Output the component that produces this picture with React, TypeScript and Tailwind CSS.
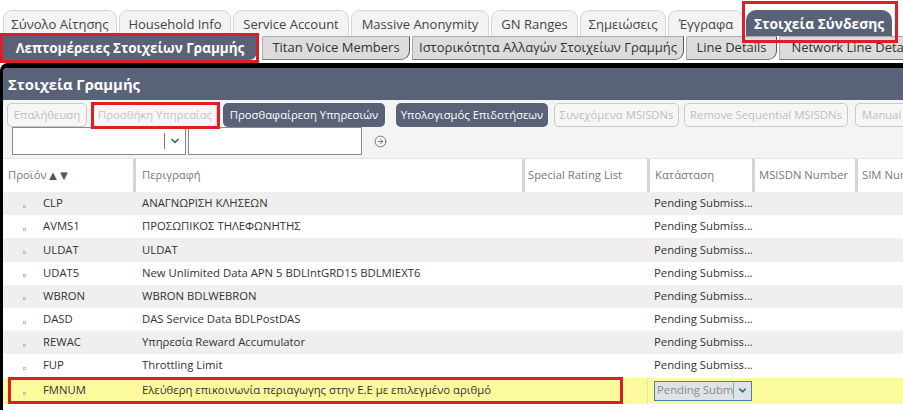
import React from "react";
import { ChevronDown, CircleArrowRight } from "lucide-react";

const tabs1 = [
  { t: "Σύνολο Αίτησης", w: "w-[114px]" },
  { t: "Household Info", w: "w-[112px]" },
  { t: "Service Account", w: "w-[116px]" },
  { t: "Massive Anonymity", w: "w-[138px]" },
  { t: "GN Ranges", w: "w-[87px]" },
  { t: "Σημειώσεις", w: "w-[86px]" },
  { t: "Έγγραφα", w: "w-[76px]" },
];

const tabs2 = [
  { t: "Titan Voice Members", w: "w-[148px]" },
  { t: "Ιστορικότητα Αλλαγών Στοιχείων Γραμμής", w: "w-[272px]" },
  { t: "Line Details", w: "w-[91px]" },
  { t: "Network Line Details", w: "w-[150px]" },
];

const rows = [
  { c: "CLP", d: "ΑΝΑΓΝΩΡΙΣΗ ΚΛΗΣΕΩΝ" },
  { c: "AVMS1", d: "ΠΡΟΣΩΠΙΚΟΣ ΤΗΛΕΦΩΝΗΤΗΣ" },
  { c: "ULDAT", d: "ULDAT" },
  { c: "UDAT5", d: "New Unlimited Data APN 5 BDLIntGRD15 BDLMIEXT6" },
  { c: "WBRON", d: "WBRON BDLWEBRON" },
  { c: "DASD", d: "DAS Service Data BDLPostDAS" },
  { c: "REWAC", d: "Υπηρεσία Reward Accumulator" },
  { c: "FUP", d: "Throttling Limit" },
];

const grid = "grid grid-cols-[130px_389px_125px_105px_103px_120px]";

function Bullet() {
  return <span className="inline-block w-[3px] h-[3px] border border-[#bdbdbd] mt-[5px]" />;
}

export default function App() {
  return (
    <div
      className="relative w-[903px] h-[410px] overflow-hidden bg-white text-[#333]"
      style={{ fontFamily: "'Open Sans', 'Noto Sans', sans-serif" }}
    >
      {/* Tabs row 1 */}
      <div className="flex gap-[2px] pl-[3px] pt-[10px] h-[36px]">
        {tabs1.map((t) => (
          <div
            key={t.t}
            className={`${t.w} shrink-0 h-[26px] flex items-center justify-center pt-[3px] rounded-t-[9px] border border-b-0 border-[#d4d4d4] bg-[#f3f3f3] text-[13px] text-[#444] whitespace-nowrap`}
          >
            {t.t}
          </div>
        ))}
        <div className="w-[146px] shrink-0 h-[26px] flex items-center justify-center pt-[2px] rounded-t-[10px] bg-[#5a6278] text-white font-bold text-[13.8px] whitespace-nowrap">
          Στοιχεία Σύνδεσης
        </div>
      </div>

      {/* Tabs row 2 */}
      <div className="flex pl-[3px] h-[24px] whitespace-nowrap overflow-hidden">
        <div className="w-[254px] shrink-0 h-[24px] flex items-center justify-center rounded-br-[8px] bg-[#5a6278] text-white font-bold text-[13.5px] mr-[5px]">
          Λεπτομέρειες Στοιχείων Γραμμής
        </div>
        <div className="flex gap-[2px] shrink-0">
          {tabs2.map((t) => (
            <div
              key={t.t}
              className={`${t.w} shrink-0 h-[24px] flex items-center justify-center bg-[#dcdcdc] border-t border-l border-[#aaa] border-r-[1.5px] border-r-[#555] border-b border-b-[#777] rounded-br-[9px] rounded-tl-[2px] text-[13px] text-[#333] overflow-hidden`}
            >
              {t.t}
            </div>
          ))}
        </div>
      </div>

      {/* Panel */}
      <div className="mt-[3px] w-[940px] h-[360px] border-t-[5px] border-l-[3px] border-black rounded-tl-[8px] overflow-hidden bg-[#f4f4f4]">
        <div className="h-[32px] bg-[#5a6278] flex items-center pl-[5px] text-white font-bold text-[14.8px]">
          Στοιχεία Γραμμής
        </div>

        {/* Buttons */}
        <div className="flex items-center h-[24px] mt-[3px] pl-[4px] text-[11.3px] whitespace-nowrap">
          <div className="w-[80px] shrink-0 h-[24px] flex items-center justify-center rounded-[5px] border border-[#c9c9c9] text-[#bdbdbd] bg-[#f6f6f6]">
            Επαλήθευση
          </div>
          <div className="ml-[6px] w-[124px] shrink-0 h-[24px] flex items-center justify-center rounded-[5px] border border-[#d0d0d0] text-[#c4c4c4] bg-[#f6f6f6]">
            Προσθήκη Υπηρεσίας
          </div>
          <div className="ml-[6px] w-[162px] shrink-0 h-[24px] flex items-center justify-center rounded-[5px] bg-[#5a6278] text-white">
            Προσθαφαίρεση Υπηρεσιών
          </div>
          <div className="ml-[11px] w-[152px] shrink-0 h-[24px] flex items-center justify-center rounded-[5px] bg-[#5a6278] text-white">
            Υπολογισμός Επιδοτήσεων
          </div>
          <div className="ml-[6px] w-[125px] shrink-0 h-[24px] flex items-center justify-center rounded-[5px] border border-[#c9c9c9] text-[#bdbdbd] bg-[#f6f6f6]">
            Συνεχόμενα MSISDNs
          </div>
          <div className="ml-[5px] w-[164px] shrink-0 h-[24px] flex items-center justify-center rounded-[5px] border border-[#c9c9c9] text-[#bdbdbd] bg-[#f6f6f6]">
            Remove Sequential MSISDNs
          </div>
          <div className="ml-[7px] w-[90px] shrink-0 h-[24px] flex items-center pl-[6px] rounded-[5px] border border-[#c9c9c9] text-[#bdbdbd] bg-[#f6f6f6]">
            Manual Entry
          </div>
        </div>

        {/* Filter row */}
        <div className="flex items-center h-[28px] pl-[9px]">
          <div className="w-[174px] h-[28px] border border-[#8a8a8a] bg-white flex items-center justify-end">
            <div className="w-px h-[16px] bg-[#777]" />
            <div className="w-[20px] flex justify-center">
              <ChevronDown size={12} strokeWidth={3.5} color="#2e6da4" />
            </div>
          </div>
          <div className="ml-[2px] w-[174px] h-[28px] border border-[#8a8a8a] bg-white" />
          <div className="ml-[12px] flex items-center">
            <CircleArrowRight size={13} strokeWidth={1.6} color="#666" />
          </div>
        </div>

        {/* Table header */}
        <div className={`${grid} mt-[3px] h-[34px] bg-white border-t border-[#e2e2e2] text-[11.3px] text-[#777] whitespace-nowrap`}>
          <div className="flex items-center pl-[5px]">
            Προϊόν
            <span className="text-[#555] text-[13px] tracking-[-2px]">▲▼</span>
          </div>
          <div className="flex items-center pl-[6px] border-l-[3px] border-[#d5d5d5]">Περιγραφή</div>
          <div className="flex items-center pl-[3px] border-l-[3px] border-[#d5d5d5]">Special Rating List</div>
          <div className="flex items-center pl-[5px] border-l-[3px] border-[#d5d5d5]">Κατάσταση</div>
          <div className="flex items-center pl-[4px] border-l-[3px] border-[#d5d5d5]">MSISDN Number</div>
          <div className="flex items-center pl-[4px] border-l-[3px] border-[#d5d5d5]">SIM Number</div>
        </div>

        {/* Rows */}
        {rows.map((r, i) => (
          <div
            key={r.c}
            className={`${grid} h-[23.2px] text-[11.3px] text-[#333] whitespace-nowrap ${i % 2 === 0 ? "bg-[#efefef]" : "bg-white"}`}
          >
            <div className="flex items-center pl-[20px] gap-[17px]">
              <Bullet />
              <span>{r.c}</span>
            </div>
            <div className="flex items-center pl-[9px]">{r.d}</div>
            <div />
            <div className="flex items-center pl-[7px]">Pending Submiss...</div>
            <div />
            <div />
          </div>
        ))}
        <div className={`${grid} h-[26px] text-[11.3px] text-[#333] whitespace-nowrap bg-[#fbfb9d]`}>
          <div className="flex items-center pl-[20px] gap-[17px]">
            <Bullet />
            <span>FMNUM</span>
          </div>
          <div className="flex items-center pl-[9px]">
            Ελεύθερη επικοινωνία περιαγωγης στην Ε.Ε με επιλεγμένο αριθμό
          </div>
          <div />
          <div className="flex items-center pl-[6px] border-l border-[#e4e4b0]">
            <div className="w-[99px] h-[20px] border border-[#4a7db0] bg-[#dfe3e8] flex items-center text-[#8a8a8a] overflow-hidden">
              <span className="pl-[2px] w-[78px] overflow-hidden">Pending Submission</span>
              <div className="w-px h-[16px] bg-[#8aa]" />
              <div className="flex-1 flex justify-center">
                <ChevronDown size={11} strokeWidth={3.5} color="#2e6da4" />
              </div>
            </div>
          </div>
          <div />
          <div />
        </div>
        <div className="h-[20px] bg-white" />
      </div>

      {/* Annotation boxes */}
      <div className="absolute left-[742px] top-[1px] w-[156px] h-[42px] border-[3px] border-[#dc1f26]" />
      <div className="absolute left-0 top-[33px] w-[259px] h-[30px] border-[3px] border-[#dc1f26]" />
      <div className="absolute left-[91px] top-[102px] w-[129px] h-[27px] border-[3px] border-[#dc1f26]" />
      <div className="absolute left-[8px] top-[377px] w-[615px] h-[27px] border-[3px] border-[#dc1f26]" />
    </div>
  );
}
